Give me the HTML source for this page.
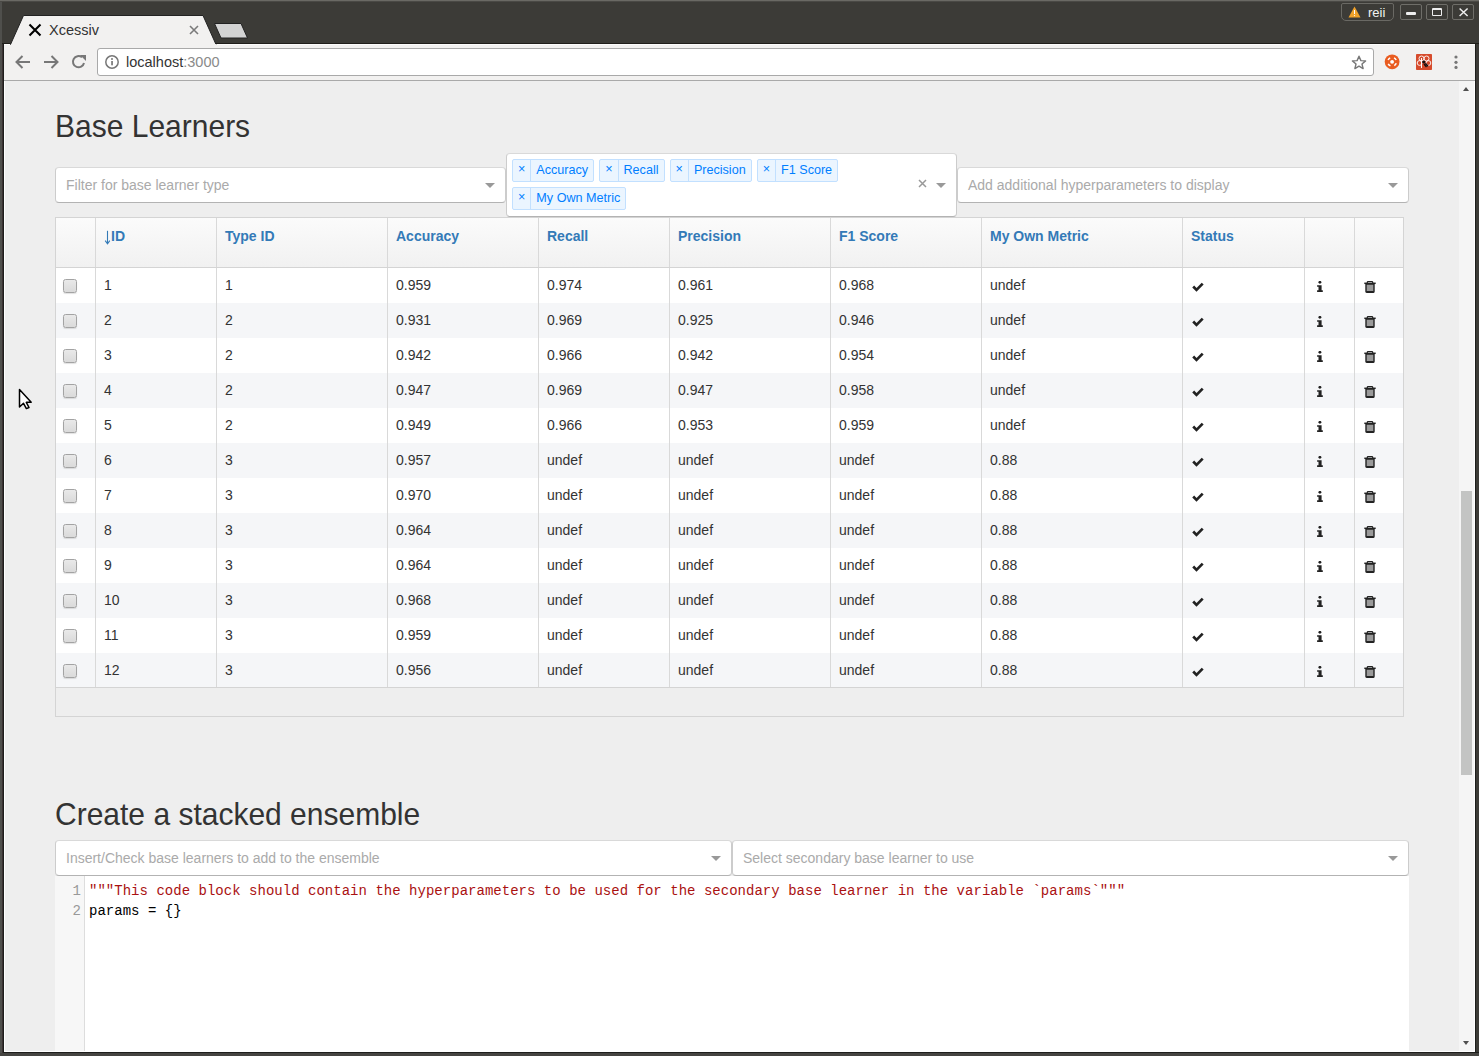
<!DOCTYPE html>
<html><head><meta charset="utf-8"><style>
*{box-sizing:border-box;margin:0;padding:0}
html,body{width:1479px;height:1056px;overflow:hidden;background:#3c3b37;font-family:"Liberation Sans",sans-serif;position:relative}
body>div,body>svg{position:absolute}
#frame{left:4px;top:44px;width:1471px;height:1008px;background:#fff}
#toolbar{left:4px;top:44px;width:1471px;height:37px;background:#f2f1f0;border-bottom:1px solid #a9a9a9}
#page{left:5px;top:81px;width:1469px;height:970px;background:#eeeeee}
.h2{font-size:30px;color:#333;line-height:33px;white-space:nowrap;transform:scaleY(1.07);transform-origin:0 27px}
.sel{background:#fff;border:1px solid #ccc;border-color:#d9d9d9 #ccc #b3b3b3;border-radius:4px;height:36px}
.ph{position:absolute;left:10px;top:0;line-height:34px;font-size:14px;color:#aaa;white-space:nowrap}
.arr{position:absolute;width:0;height:0;border-style:solid;border-width:5px 5px 2.5px;border-color:#999 transparent transparent}
.clr{position:absolute;right:29px;top:20px;font-size:17px;line-height:17px;color:#999}
.tags{position:absolute}
.tag{display:inline-block;vertical-align:top;margin-left:5px;margin-top:5px;font-size:12.6px;line-height:17.6px;height:23px;overflow:hidden;border-radius:2px;border:1px solid #c2e0ff;background:#ebf5ff;color:#007eff;white-space:nowrap}
.ti{display:inline-block;vertical-align:top;height:21px;padding:1px 5px 3px;border-right:1px solid #c2e0ff}
.tl{display:inline-block;vertical-align:top;padding:2px 5px}
#tbl{background:#eeeeee;border:1px solid #d4d4d4}
.thead{background:linear-gradient(#fbfbfb,#f1f1f1)}
.rbg{position:absolute;left:56px;width:1347px;height:35px;background:#fff}
.rbg.alt{background:#f5f6f8}
.vl{position:absolute;top:218px;height:469px;width:1px;background:#d9d9d9}
.hl{position:absolute;left:56px;width:1347px;height:1px;background:#d4d4d4}
.th{position:absolute;top:217px;line-height:38px;font-size:14px;font-weight:bold;color:#337ab7;white-space:nowrap}
.sarr{font-weight:normal}
.td{position:absolute;line-height:35px;font-size:14px;color:#333;white-space:nowrap}
.cb{position:absolute;left:63px;width:14px;height:14px;border:1px solid #a3a3a3;border-radius:2.5px;background:linear-gradient(#e9e9e9,#dadada);box-shadow:0 1px 1px rgba(0,0,0,.12)}
.ic{position:absolute}
#cm{left:55px;top:876px;width:1354px;height:175px;background:#fff}
#gut{position:absolute;left:0;top:0;width:30px;height:175px;background:#f7f7f7;border-right:1px solid #ddd}
.ln{position:absolute;left:0;width:26px;text-align:right;font-family:"Liberation Mono",monospace;font-size:14px;line-height:20px;color:#999}
.code{position:absolute;left:34px;font-family:"Liberation Mono",monospace;font-size:14px;letter-spacing:0.022px;line-height:20px;color:#000;white-space:pre}
.str{color:#a11}
#sbar{left:1459px;top:81px;width:15px;height:970px;background:#f5f5f5}
#thumb{position:absolute;left:2px;top:410px;width:11px;height:284px;background:#c3c4c3}
.sarr-up{position:absolute;left:4px;top:6px;width:0;height:0;border-style:solid;border-width:0 3.5px 4px;border-color:transparent transparent #505050}
.sarr-dn{position:absolute;left:4px;top:960px;width:0;height:0;border-style:solid;border-width:4px 3.5px 0;border-color:#505050 transparent transparent}

</style></head><body>
<div style="left:0;top:0;width:1479px;height:1px;background:#6a6964"></div><div style="left:0;top:1px;width:1479px;height:1px;background:#4a4945"></div>
<div style="left:0;top:43px;width:1479px;height:1px;background:#1f1e1a"></div>
<div id="toolbar"></div>
<div style="left:4px;top:44px;width:1471px;height:1px;background:#fcfcfb"></div>
<svg style="left:0;top:0" width="260" height="45" viewBox="0 0 260 45">
 <path d="M10.5 44.5 L23.5 15.5 H203 L216 44.5 Z" fill="#f2f1f0" stroke="#222" stroke-width="1"/>
 <path d="M214.5 23.5 H241 L247.5 38 H221 Z" fill="#d3d3d3" stroke="#222" stroke-width="1"/>
 <path d="M190 26 L198 34 M198 26 L190 34" stroke="#7a7a7a" stroke-width="1.6"/>
 <path d="M29.5 24.5 L40.5 35.5 M40.5 24.5 L29.5 35.5" stroke="#000" stroke-width="2.1"/>
</svg>
<div style="left:11px;top:44px;width:205px;height:1px;background:#f2f1f0"></div>
<div style="left:49px;top:21px;font-size:14.5px;color:#333;line-height:18px">Xcessiv</div>
<!-- window buttons -->
<div style="left:1341px;top:3px;width:53px;height:18px;border:1px solid #6a6964;border-radius:2px 2px 5px 5px"></div>
<svg style="left:1348px;top:6px" width="13" height="12" viewBox="0 0 13 12"><path d="M6.5 0.5 L12.5 11.5 H0.5 Z" fill="#f0a22a"/><path d="M6.5 4 V8" stroke="#fff" stroke-width="1"/><circle cx="6.5" cy="9.6" r="0.6" fill="#fff"/></svg>
<div style="left:1368px;top:5px;font-size:13px;color:#f2f2f2;line-height:16px">reii</div>
<div style="left:1400px;top:4px;width:22px;height:16px;border:1px solid #6f6e69;border-radius:2px"></div>
<div style="left:1426px;top:4px;width:22px;height:16px;border:1px solid #6f6e69;border-radius:2px"></div>
<div style="left:1452px;top:4px;width:22px;height:16px;border:1px solid #6f6e69;border-radius:2px"></div>
<div style="left:1406px;top:12px;width:10px;height:3px;background:#eee;border-radius:1px"></div>
<div style="left:1432px;top:8px;width:10px;height:8px;border:1.5px solid #eee;border-top-width:2.5px;border-radius:1px"></div>
<svg style="left:1458px;top:7px" width="11" height="10" viewBox="0 0 11 10"><path d="M1.6 1.5 L9.6 9 M9.6 1.5 L1.6 9" stroke="#eee" stroke-width="1.5"/></svg>
<!-- toolbar icons -->
<svg style="left:14px;top:54px" width="18" height="16" viewBox="0 0 18 16"><path d="M16 8 H3 M8.5 2 L2.5 8 L8.5 14" fill="none" stroke="#777" stroke-width="2"/></svg>
<svg style="left:42px;top:54px" width="18" height="16" viewBox="0 0 18 16"><path d="M2 8 H15 M9.5 2 L15.5 8 L9.5 14" fill="none" stroke="#777" stroke-width="2"/></svg>
<svg style="left:71px;top:54px" width="16" height="16" viewBox="0 0 16 16"><path d="M13 9 A5.6 5.6 0 1 1 11 3.3" fill="none" stroke="#777" stroke-width="2"/><path d="M9 1 H15 V7 Z" fill="#777"/></svg>
<div style="left:97px;top:48px;width:1277px;height:28px;background:#fff;border:1px solid #a9a9a9;border-radius:3px"></div>
<svg style="left:104px;top:55px" width="16" height="14" viewBox="0 0 16 14"><circle cx="8" cy="7" r="6.2" fill="none" stroke="#777" stroke-width="1.5"/><rect x="7.2" y="6" width="1.7" height="4.3" fill="#777"/><circle cx="8" cy="4" r="1" fill="#777"/></svg>
<div style="left:126px;top:54px;font-size:14.5px;line-height:17px;color:#333;white-space:nowrap">localhost<span style="color:#8a8a8a">:3000</span></div>
<svg style="left:1351px;top:55px" width="16" height="15" viewBox="0 0 16 15"><path d="M8 1.2 L9.9 5.6 L14.6 5.9 L11 9 L12.1 13.6 L8 11.1 L3.9 13.6 L5 9 L1.4 5.9 L6.1 5.6 Z" fill="none" stroke="#777" stroke-width="1.4" stroke-linejoin="round"/></svg>
<svg style="left:1384px;top:54px" width="16" height="16" viewBox="0 0 16 16"><circle cx="8.1" cy="7.8" r="7.4" fill="#e95c20"/><circle cx="8.1" cy="7.8" r="4.4" fill="none" stroke="#fff" stroke-width="1.5" stroke-dasharray="3 3.9" transform="rotate(20 8.1 7.8)"/><circle cx="8.1" cy="7.8" r="1.9" fill="#fff"/></svg>
<svg style="left:1416px;top:54px" width="16" height="16" viewBox="0 0 16 16"><rect x="0" y="0" width="16" height="16" rx="0.8" fill="#d64b2c"/><circle cx="5.5" cy="4.5" r="2.5" fill="none" stroke="#fff" stroke-width="0.9"/><circle cx="10.5" cy="4.5" r="2.5" fill="none" stroke="#fff" stroke-width="0.9"/><circle cx="3.6" cy="9" r="2.4" fill="none" stroke="#fff" stroke-width="0.9"/><circle cx="12.4" cy="9" r="2.4" fill="none" stroke="#fff" stroke-width="0.9"/><path d="M5.5 4 V14" stroke="#fff" stroke-width="1"/><circle cx="7.8" cy="8" r="1.6" fill="#111"/><path d="M8 10 L10.5 13 M9.4 9.2 L12 12.2" stroke="#111" stroke-width="1.3"/></svg>
<svg style="left:1453px;top:54px" width="6" height="16" viewBox="0 0 6 16"><circle cx="3" cy="3" r="1.6" fill="#777"/><circle cx="3" cy="8.3" r="1.6" fill="#777"/><circle cx="3" cy="13.4" r="1.6" fill="#777"/></svg>
<div style="left:4px;top:81px;width:1px;height:971px;background:#fff"></div>
<div style="left:4px;top:1051px;width:1471px;height:1px;background:#fff"></div>
<div style="left:1474px;top:81px;width:1px;height:971px;background:#fff"></div>
<div style="left:0;top:1052px;width:1479px;height:1px;background:#1e1e1c"></div>
<div style="left:0;top:1053px;width:1479px;height:3px;background:#454441"></div>
<div style="left:0;top:2px;width:2px;height:1051px;background:#4f4f4c"></div>
<div style="left:2px;top:44px;width:1px;height:1009px;background:#3a3232"></div>
<div style="left:3px;top:44px;width:1px;height:1009px;background:#1e1e1c"></div>
<div style="left:1475px;top:44px;width:1px;height:1009px;background:#1e1e1c"></div>
<div id="page"></div>
<div class="h2" style="left:55px;top:110px">Base Learners</div>
<div class="sel" style="left:55px;top:167px;width:451px"><span class="ph">Filter for base learner type</span><span class="arr" style="right:10px;top:15px"></span></div>
<div class="sel" style="left:957px;top:167px;width:452px"><span class="ph">Add additional hyperparameters to display</span><span class="arr" style="right:10px;top:15px"></span></div>
<div class="sel multi" style="left:506px;top:153px;width:451px;height:64px"><svg style="position:absolute;left:411px;top:25px" width="9" height="9" viewBox="0 0 9 9"><path d="M1 1 L8 8 M8 1 L1 8" stroke="#999" stroke-width="1.5"/></svg><span class="arr" style="right:10px;top:29px"></span></div>
<div class="tags" style="left:507px;top:154px;width:410px"><div class="tag"><span class="ti">&times;</span><span class="tl">Accuracy</span></div><div class="tag"><span class="ti">&times;</span><span class="tl">Recall</span></div><div class="tag"><span class="ti">&times;</span><span class="tl">Precision</span></div><div class="tag"><span class="ti">&times;</span><span class="tl">F1 Score</span></div><div class="tag"><span class="ti">&times;</span><span class="tl">My Own Metric</span></div></div>
<div id="tbl" style="left:55px;top:217px;width:1349px;height:500px"></div>
<div class="thead" style="left:56px;top:218px;width:1347px;height:49px"></div>
<div class="rbg" style="top:268px"></div>
<div class="rbg alt" style="top:303px"></div>
<div class="rbg" style="top:338px"></div>
<div class="rbg alt" style="top:373px"></div>
<div class="rbg" style="top:408px"></div>
<div class="rbg alt" style="top:443px"></div>
<div class="rbg" style="top:478px"></div>
<div class="rbg alt" style="top:513px"></div>
<div class="rbg" style="top:548px"></div>
<div class="rbg alt" style="top:583px"></div>
<div class="rbg" style="top:618px"></div>
<div class="rbg alt" style="top:653px"></div>
<div class="vl" style="left:95px"></div>
<div class="vl" style="left:216px"></div>
<div class="vl" style="left:387px"></div>
<div class="vl" style="left:538px"></div>
<div class="vl" style="left:669px"></div>
<div class="vl" style="left:830px"></div>
<div class="vl" style="left:981px"></div>
<div class="vl" style="left:1182px"></div>
<div class="vl" style="left:1304px"></div>
<div class="vl" style="left:1354px"></div>
<div class="hl" style="top:267px"></div>
<div class="hl" style="top:687px"></div>
<svg class="ic" style="left:104px;top:230px" width="7" height="15" viewBox="0 0 7 15"><path d="M3.5 0.8 V13.4" stroke="#337ab7" stroke-width="1.1"/><path d="M1.2 10.6 L3.5 13.8 L5.8 10.6" fill="none" stroke="#337ab7" stroke-width="1.1"/></svg><div class="th" style="left:111px">ID</div>
<div class="th" style="left:225px">Type ID</div>
<div class="th" style="left:396px">Accuracy</div>
<div class="th" style="left:547px">Recall</div>
<div class="th" style="left:678px">Precision</div>
<div class="th" style="left:839px">F1 Score</div>
<div class="th" style="left:990px">My Own Metric</div>
<div class="th" style="left:1191px">Status</div>
<div class="cb" style="top:279px"></div>
<div class="td" style="left:104px;top:268px">1</div>
<div class="td" style="left:225px;top:268px">1</div>
<div class="td" style="left:396px;top:268px">0.959</div>
<div class="td" style="left:547px;top:268px">0.974</div>
<div class="td" style="left:678px;top:268px">0.961</div>
<div class="td" style="left:839px;top:268px">0.968</div>
<div class="td" style="left:990px;top:268px">undef</div>
<svg class="ic" style="left:1191px;top:281px" width="14" height="12" viewBox="0 0 14 12"><path d="M2.2 5.5 L5.5 8.9 L11.7 2.6" fill="none" stroke="#222" stroke-width="2.7"/></svg>
<svg class="ic" style="left:1316px;top:281px" width="8" height="12" viewBox="0 0 8 12"><circle cx="3.9" cy="1.3" r="1.45" fill="#222"/><path d="M1.1 4.3 H5.6 V9.3 H6.8 V10.9 H1.1 V9.3 H2.5 V5.8 H1.1 Z" fill="#222"/></svg>
<svg class="ic" style="left:1364px;top:280px" width="12" height="13" viewBox="0 0 12 13"><path d="M0.3 3.3 H11.7" stroke="#222" stroke-width="1.5"/><path d="M3.3 3 V2.2 Q3.3 1.5 4.1 1.5 H7.9 Q8.7 1.5 8.7 2.2 V3" fill="none" stroke="#222" stroke-width="1.2"/><path d="M2 4 H10 V11.4 Q10 12.3 9.1 12.3 H2.9 Q2 12.3 2 11.4 Z" fill="#9a9a9a" stroke="#222" stroke-width="1.4"/><path d="M2.4 11.7 H9.6" stroke="#222" stroke-width="1.4"/></svg>
<div class="cb" style="top:314px"></div>
<div class="td" style="left:104px;top:303px">2</div>
<div class="td" style="left:225px;top:303px">2</div>
<div class="td" style="left:396px;top:303px">0.931</div>
<div class="td" style="left:547px;top:303px">0.969</div>
<div class="td" style="left:678px;top:303px">0.925</div>
<div class="td" style="left:839px;top:303px">0.946</div>
<div class="td" style="left:990px;top:303px">undef</div>
<svg class="ic" style="left:1191px;top:316px" width="14" height="12" viewBox="0 0 14 12"><path d="M2.2 5.5 L5.5 8.9 L11.7 2.6" fill="none" stroke="#222" stroke-width="2.7"/></svg>
<svg class="ic" style="left:1316px;top:316px" width="8" height="12" viewBox="0 0 8 12"><circle cx="3.9" cy="1.3" r="1.45" fill="#222"/><path d="M1.1 4.3 H5.6 V9.3 H6.8 V10.9 H1.1 V9.3 H2.5 V5.8 H1.1 Z" fill="#222"/></svg>
<svg class="ic" style="left:1364px;top:315px" width="12" height="13" viewBox="0 0 12 13"><path d="M0.3 3.3 H11.7" stroke="#222" stroke-width="1.5"/><path d="M3.3 3 V2.2 Q3.3 1.5 4.1 1.5 H7.9 Q8.7 1.5 8.7 2.2 V3" fill="none" stroke="#222" stroke-width="1.2"/><path d="M2 4 H10 V11.4 Q10 12.3 9.1 12.3 H2.9 Q2 12.3 2 11.4 Z" fill="#9a9a9a" stroke="#222" stroke-width="1.4"/><path d="M2.4 11.7 H9.6" stroke="#222" stroke-width="1.4"/></svg>
<div class="cb" style="top:349px"></div>
<div class="td" style="left:104px;top:338px">3</div>
<div class="td" style="left:225px;top:338px">2</div>
<div class="td" style="left:396px;top:338px">0.942</div>
<div class="td" style="left:547px;top:338px">0.966</div>
<div class="td" style="left:678px;top:338px">0.942</div>
<div class="td" style="left:839px;top:338px">0.954</div>
<div class="td" style="left:990px;top:338px">undef</div>
<svg class="ic" style="left:1191px;top:351px" width="14" height="12" viewBox="0 0 14 12"><path d="M2.2 5.5 L5.5 8.9 L11.7 2.6" fill="none" stroke="#222" stroke-width="2.7"/></svg>
<svg class="ic" style="left:1316px;top:351px" width="8" height="12" viewBox="0 0 8 12"><circle cx="3.9" cy="1.3" r="1.45" fill="#222"/><path d="M1.1 4.3 H5.6 V9.3 H6.8 V10.9 H1.1 V9.3 H2.5 V5.8 H1.1 Z" fill="#222"/></svg>
<svg class="ic" style="left:1364px;top:350px" width="12" height="13" viewBox="0 0 12 13"><path d="M0.3 3.3 H11.7" stroke="#222" stroke-width="1.5"/><path d="M3.3 3 V2.2 Q3.3 1.5 4.1 1.5 H7.9 Q8.7 1.5 8.7 2.2 V3" fill="none" stroke="#222" stroke-width="1.2"/><path d="M2 4 H10 V11.4 Q10 12.3 9.1 12.3 H2.9 Q2 12.3 2 11.4 Z" fill="#9a9a9a" stroke="#222" stroke-width="1.4"/><path d="M2.4 11.7 H9.6" stroke="#222" stroke-width="1.4"/></svg>
<div class="cb" style="top:384px"></div>
<div class="td" style="left:104px;top:373px">4</div>
<div class="td" style="left:225px;top:373px">2</div>
<div class="td" style="left:396px;top:373px">0.947</div>
<div class="td" style="left:547px;top:373px">0.969</div>
<div class="td" style="left:678px;top:373px">0.947</div>
<div class="td" style="left:839px;top:373px">0.958</div>
<div class="td" style="left:990px;top:373px">undef</div>
<svg class="ic" style="left:1191px;top:386px" width="14" height="12" viewBox="0 0 14 12"><path d="M2.2 5.5 L5.5 8.9 L11.7 2.6" fill="none" stroke="#222" stroke-width="2.7"/></svg>
<svg class="ic" style="left:1316px;top:386px" width="8" height="12" viewBox="0 0 8 12"><circle cx="3.9" cy="1.3" r="1.45" fill="#222"/><path d="M1.1 4.3 H5.6 V9.3 H6.8 V10.9 H1.1 V9.3 H2.5 V5.8 H1.1 Z" fill="#222"/></svg>
<svg class="ic" style="left:1364px;top:385px" width="12" height="13" viewBox="0 0 12 13"><path d="M0.3 3.3 H11.7" stroke="#222" stroke-width="1.5"/><path d="M3.3 3 V2.2 Q3.3 1.5 4.1 1.5 H7.9 Q8.7 1.5 8.7 2.2 V3" fill="none" stroke="#222" stroke-width="1.2"/><path d="M2 4 H10 V11.4 Q10 12.3 9.1 12.3 H2.9 Q2 12.3 2 11.4 Z" fill="#9a9a9a" stroke="#222" stroke-width="1.4"/><path d="M2.4 11.7 H9.6" stroke="#222" stroke-width="1.4"/></svg>
<div class="cb" style="top:419px"></div>
<div class="td" style="left:104px;top:408px">5</div>
<div class="td" style="left:225px;top:408px">2</div>
<div class="td" style="left:396px;top:408px">0.949</div>
<div class="td" style="left:547px;top:408px">0.966</div>
<div class="td" style="left:678px;top:408px">0.953</div>
<div class="td" style="left:839px;top:408px">0.959</div>
<div class="td" style="left:990px;top:408px">undef</div>
<svg class="ic" style="left:1191px;top:421px" width="14" height="12" viewBox="0 0 14 12"><path d="M2.2 5.5 L5.5 8.9 L11.7 2.6" fill="none" stroke="#222" stroke-width="2.7"/></svg>
<svg class="ic" style="left:1316px;top:421px" width="8" height="12" viewBox="0 0 8 12"><circle cx="3.9" cy="1.3" r="1.45" fill="#222"/><path d="M1.1 4.3 H5.6 V9.3 H6.8 V10.9 H1.1 V9.3 H2.5 V5.8 H1.1 Z" fill="#222"/></svg>
<svg class="ic" style="left:1364px;top:420px" width="12" height="13" viewBox="0 0 12 13"><path d="M0.3 3.3 H11.7" stroke="#222" stroke-width="1.5"/><path d="M3.3 3 V2.2 Q3.3 1.5 4.1 1.5 H7.9 Q8.7 1.5 8.7 2.2 V3" fill="none" stroke="#222" stroke-width="1.2"/><path d="M2 4 H10 V11.4 Q10 12.3 9.1 12.3 H2.9 Q2 12.3 2 11.4 Z" fill="#9a9a9a" stroke="#222" stroke-width="1.4"/><path d="M2.4 11.7 H9.6" stroke="#222" stroke-width="1.4"/></svg>
<div class="cb" style="top:454px"></div>
<div class="td" style="left:104px;top:443px">6</div>
<div class="td" style="left:225px;top:443px">3</div>
<div class="td" style="left:396px;top:443px">0.957</div>
<div class="td" style="left:547px;top:443px">undef</div>
<div class="td" style="left:678px;top:443px">undef</div>
<div class="td" style="left:839px;top:443px">undef</div>
<div class="td" style="left:990px;top:443px">0.88</div>
<svg class="ic" style="left:1191px;top:456px" width="14" height="12" viewBox="0 0 14 12"><path d="M2.2 5.5 L5.5 8.9 L11.7 2.6" fill="none" stroke="#222" stroke-width="2.7"/></svg>
<svg class="ic" style="left:1316px;top:456px" width="8" height="12" viewBox="0 0 8 12"><circle cx="3.9" cy="1.3" r="1.45" fill="#222"/><path d="M1.1 4.3 H5.6 V9.3 H6.8 V10.9 H1.1 V9.3 H2.5 V5.8 H1.1 Z" fill="#222"/></svg>
<svg class="ic" style="left:1364px;top:455px" width="12" height="13" viewBox="0 0 12 13"><path d="M0.3 3.3 H11.7" stroke="#222" stroke-width="1.5"/><path d="M3.3 3 V2.2 Q3.3 1.5 4.1 1.5 H7.9 Q8.7 1.5 8.7 2.2 V3" fill="none" stroke="#222" stroke-width="1.2"/><path d="M2 4 H10 V11.4 Q10 12.3 9.1 12.3 H2.9 Q2 12.3 2 11.4 Z" fill="#9a9a9a" stroke="#222" stroke-width="1.4"/><path d="M2.4 11.7 H9.6" stroke="#222" stroke-width="1.4"/></svg>
<div class="cb" style="top:489px"></div>
<div class="td" style="left:104px;top:478px">7</div>
<div class="td" style="left:225px;top:478px">3</div>
<div class="td" style="left:396px;top:478px">0.970</div>
<div class="td" style="left:547px;top:478px">undef</div>
<div class="td" style="left:678px;top:478px">undef</div>
<div class="td" style="left:839px;top:478px">undef</div>
<div class="td" style="left:990px;top:478px">0.88</div>
<svg class="ic" style="left:1191px;top:491px" width="14" height="12" viewBox="0 0 14 12"><path d="M2.2 5.5 L5.5 8.9 L11.7 2.6" fill="none" stroke="#222" stroke-width="2.7"/></svg>
<svg class="ic" style="left:1316px;top:491px" width="8" height="12" viewBox="0 0 8 12"><circle cx="3.9" cy="1.3" r="1.45" fill="#222"/><path d="M1.1 4.3 H5.6 V9.3 H6.8 V10.9 H1.1 V9.3 H2.5 V5.8 H1.1 Z" fill="#222"/></svg>
<svg class="ic" style="left:1364px;top:490px" width="12" height="13" viewBox="0 0 12 13"><path d="M0.3 3.3 H11.7" stroke="#222" stroke-width="1.5"/><path d="M3.3 3 V2.2 Q3.3 1.5 4.1 1.5 H7.9 Q8.7 1.5 8.7 2.2 V3" fill="none" stroke="#222" stroke-width="1.2"/><path d="M2 4 H10 V11.4 Q10 12.3 9.1 12.3 H2.9 Q2 12.3 2 11.4 Z" fill="#9a9a9a" stroke="#222" stroke-width="1.4"/><path d="M2.4 11.7 H9.6" stroke="#222" stroke-width="1.4"/></svg>
<div class="cb" style="top:524px"></div>
<div class="td" style="left:104px;top:513px">8</div>
<div class="td" style="left:225px;top:513px">3</div>
<div class="td" style="left:396px;top:513px">0.964</div>
<div class="td" style="left:547px;top:513px">undef</div>
<div class="td" style="left:678px;top:513px">undef</div>
<div class="td" style="left:839px;top:513px">undef</div>
<div class="td" style="left:990px;top:513px">0.88</div>
<svg class="ic" style="left:1191px;top:526px" width="14" height="12" viewBox="0 0 14 12"><path d="M2.2 5.5 L5.5 8.9 L11.7 2.6" fill="none" stroke="#222" stroke-width="2.7"/></svg>
<svg class="ic" style="left:1316px;top:526px" width="8" height="12" viewBox="0 0 8 12"><circle cx="3.9" cy="1.3" r="1.45" fill="#222"/><path d="M1.1 4.3 H5.6 V9.3 H6.8 V10.9 H1.1 V9.3 H2.5 V5.8 H1.1 Z" fill="#222"/></svg>
<svg class="ic" style="left:1364px;top:525px" width="12" height="13" viewBox="0 0 12 13"><path d="M0.3 3.3 H11.7" stroke="#222" stroke-width="1.5"/><path d="M3.3 3 V2.2 Q3.3 1.5 4.1 1.5 H7.9 Q8.7 1.5 8.7 2.2 V3" fill="none" stroke="#222" stroke-width="1.2"/><path d="M2 4 H10 V11.4 Q10 12.3 9.1 12.3 H2.9 Q2 12.3 2 11.4 Z" fill="#9a9a9a" stroke="#222" stroke-width="1.4"/><path d="M2.4 11.7 H9.6" stroke="#222" stroke-width="1.4"/></svg>
<div class="cb" style="top:559px"></div>
<div class="td" style="left:104px;top:548px">9</div>
<div class="td" style="left:225px;top:548px">3</div>
<div class="td" style="left:396px;top:548px">0.964</div>
<div class="td" style="left:547px;top:548px">undef</div>
<div class="td" style="left:678px;top:548px">undef</div>
<div class="td" style="left:839px;top:548px">undef</div>
<div class="td" style="left:990px;top:548px">0.88</div>
<svg class="ic" style="left:1191px;top:561px" width="14" height="12" viewBox="0 0 14 12"><path d="M2.2 5.5 L5.5 8.9 L11.7 2.6" fill="none" stroke="#222" stroke-width="2.7"/></svg>
<svg class="ic" style="left:1316px;top:561px" width="8" height="12" viewBox="0 0 8 12"><circle cx="3.9" cy="1.3" r="1.45" fill="#222"/><path d="M1.1 4.3 H5.6 V9.3 H6.8 V10.9 H1.1 V9.3 H2.5 V5.8 H1.1 Z" fill="#222"/></svg>
<svg class="ic" style="left:1364px;top:560px" width="12" height="13" viewBox="0 0 12 13"><path d="M0.3 3.3 H11.7" stroke="#222" stroke-width="1.5"/><path d="M3.3 3 V2.2 Q3.3 1.5 4.1 1.5 H7.9 Q8.7 1.5 8.7 2.2 V3" fill="none" stroke="#222" stroke-width="1.2"/><path d="M2 4 H10 V11.4 Q10 12.3 9.1 12.3 H2.9 Q2 12.3 2 11.4 Z" fill="#9a9a9a" stroke="#222" stroke-width="1.4"/><path d="M2.4 11.7 H9.6" stroke="#222" stroke-width="1.4"/></svg>
<div class="cb" style="top:594px"></div>
<div class="td" style="left:104px;top:583px">10</div>
<div class="td" style="left:225px;top:583px">3</div>
<div class="td" style="left:396px;top:583px">0.968</div>
<div class="td" style="left:547px;top:583px">undef</div>
<div class="td" style="left:678px;top:583px">undef</div>
<div class="td" style="left:839px;top:583px">undef</div>
<div class="td" style="left:990px;top:583px">0.88</div>
<svg class="ic" style="left:1191px;top:596px" width="14" height="12" viewBox="0 0 14 12"><path d="M2.2 5.5 L5.5 8.9 L11.7 2.6" fill="none" stroke="#222" stroke-width="2.7"/></svg>
<svg class="ic" style="left:1316px;top:596px" width="8" height="12" viewBox="0 0 8 12"><circle cx="3.9" cy="1.3" r="1.45" fill="#222"/><path d="M1.1 4.3 H5.6 V9.3 H6.8 V10.9 H1.1 V9.3 H2.5 V5.8 H1.1 Z" fill="#222"/></svg>
<svg class="ic" style="left:1364px;top:595px" width="12" height="13" viewBox="0 0 12 13"><path d="M0.3 3.3 H11.7" stroke="#222" stroke-width="1.5"/><path d="M3.3 3 V2.2 Q3.3 1.5 4.1 1.5 H7.9 Q8.7 1.5 8.7 2.2 V3" fill="none" stroke="#222" stroke-width="1.2"/><path d="M2 4 H10 V11.4 Q10 12.3 9.1 12.3 H2.9 Q2 12.3 2 11.4 Z" fill="#9a9a9a" stroke="#222" stroke-width="1.4"/><path d="M2.4 11.7 H9.6" stroke="#222" stroke-width="1.4"/></svg>
<div class="cb" style="top:629px"></div>
<div class="td" style="left:104px;top:618px">11</div>
<div class="td" style="left:225px;top:618px">3</div>
<div class="td" style="left:396px;top:618px">0.959</div>
<div class="td" style="left:547px;top:618px">undef</div>
<div class="td" style="left:678px;top:618px">undef</div>
<div class="td" style="left:839px;top:618px">undef</div>
<div class="td" style="left:990px;top:618px">0.88</div>
<svg class="ic" style="left:1191px;top:631px" width="14" height="12" viewBox="0 0 14 12"><path d="M2.2 5.5 L5.5 8.9 L11.7 2.6" fill="none" stroke="#222" stroke-width="2.7"/></svg>
<svg class="ic" style="left:1316px;top:631px" width="8" height="12" viewBox="0 0 8 12"><circle cx="3.9" cy="1.3" r="1.45" fill="#222"/><path d="M1.1 4.3 H5.6 V9.3 H6.8 V10.9 H1.1 V9.3 H2.5 V5.8 H1.1 Z" fill="#222"/></svg>
<svg class="ic" style="left:1364px;top:630px" width="12" height="13" viewBox="0 0 12 13"><path d="M0.3 3.3 H11.7" stroke="#222" stroke-width="1.5"/><path d="M3.3 3 V2.2 Q3.3 1.5 4.1 1.5 H7.9 Q8.7 1.5 8.7 2.2 V3" fill="none" stroke="#222" stroke-width="1.2"/><path d="M2 4 H10 V11.4 Q10 12.3 9.1 12.3 H2.9 Q2 12.3 2 11.4 Z" fill="#9a9a9a" stroke="#222" stroke-width="1.4"/><path d="M2.4 11.7 H9.6" stroke="#222" stroke-width="1.4"/></svg>
<div class="cb" style="top:664px"></div>
<div class="td" style="left:104px;top:653px">12</div>
<div class="td" style="left:225px;top:653px">3</div>
<div class="td" style="left:396px;top:653px">0.956</div>
<div class="td" style="left:547px;top:653px">undef</div>
<div class="td" style="left:678px;top:653px">undef</div>
<div class="td" style="left:839px;top:653px">undef</div>
<div class="td" style="left:990px;top:653px">0.88</div>
<svg class="ic" style="left:1191px;top:666px" width="14" height="12" viewBox="0 0 14 12"><path d="M2.2 5.5 L5.5 8.9 L11.7 2.6" fill="none" stroke="#222" stroke-width="2.7"/></svg>
<svg class="ic" style="left:1316px;top:666px" width="8" height="12" viewBox="0 0 8 12"><circle cx="3.9" cy="1.3" r="1.45" fill="#222"/><path d="M1.1 4.3 H5.6 V9.3 H6.8 V10.9 H1.1 V9.3 H2.5 V5.8 H1.1 Z" fill="#222"/></svg>
<svg class="ic" style="left:1364px;top:665px" width="12" height="13" viewBox="0 0 12 13"><path d="M0.3 3.3 H11.7" stroke="#222" stroke-width="1.5"/><path d="M3.3 3 V2.2 Q3.3 1.5 4.1 1.5 H7.9 Q8.7 1.5 8.7 2.2 V3" fill="none" stroke="#222" stroke-width="1.2"/><path d="M2 4 H10 V11.4 Q10 12.3 9.1 12.3 H2.9 Q2 12.3 2 11.4 Z" fill="#9a9a9a" stroke="#222" stroke-width="1.4"/><path d="M2.4 11.7 H9.6" stroke="#222" stroke-width="1.4"/></svg>
<div class="h2" style="left:55px;top:798px">Create a stacked ensemble</div>
<div class="sel" style="left:55px;top:840px;width:677px"><span class="ph">Insert/Check base learners to add to the ensemble</span><span class="arr" style="right:10px;top:15px"></span></div>
<div class="sel" style="left:732px;top:840px;width:677px"><span class="ph">Select secondary base learner to use</span><span class="arr" style="right:10px;top:15px"></span></div>
<div id="cm"><div id="gut"></div><div class="ln" style="top:5px">1</div><div class="ln" style="top:25px">2</div><div class="code" style="top:5px"><span class="str">"""This code block should contain the hyperparameters to be used for the secondary base learner in the variable `params`"""</span></div><div class="code" style="top:25px">params = {}</div></div>
<div id="sbar"><div id="thumb"></div><div class="sarr-up"></div><div class="sarr-dn"></div></div>
<svg style="position:absolute;left:18px;top:388px" width="16" height="23" viewBox="0 0 16 23"><path d="M1.5 1.5 L1.5 19 L5.5 15.3 L8.4 20.6 L11 19.5 L8.3 14.3 L13.2 14.3 Z" fill="#fff" stroke="#000" stroke-width="1.5" stroke-linejoin="round"/></svg>
</body></html>
